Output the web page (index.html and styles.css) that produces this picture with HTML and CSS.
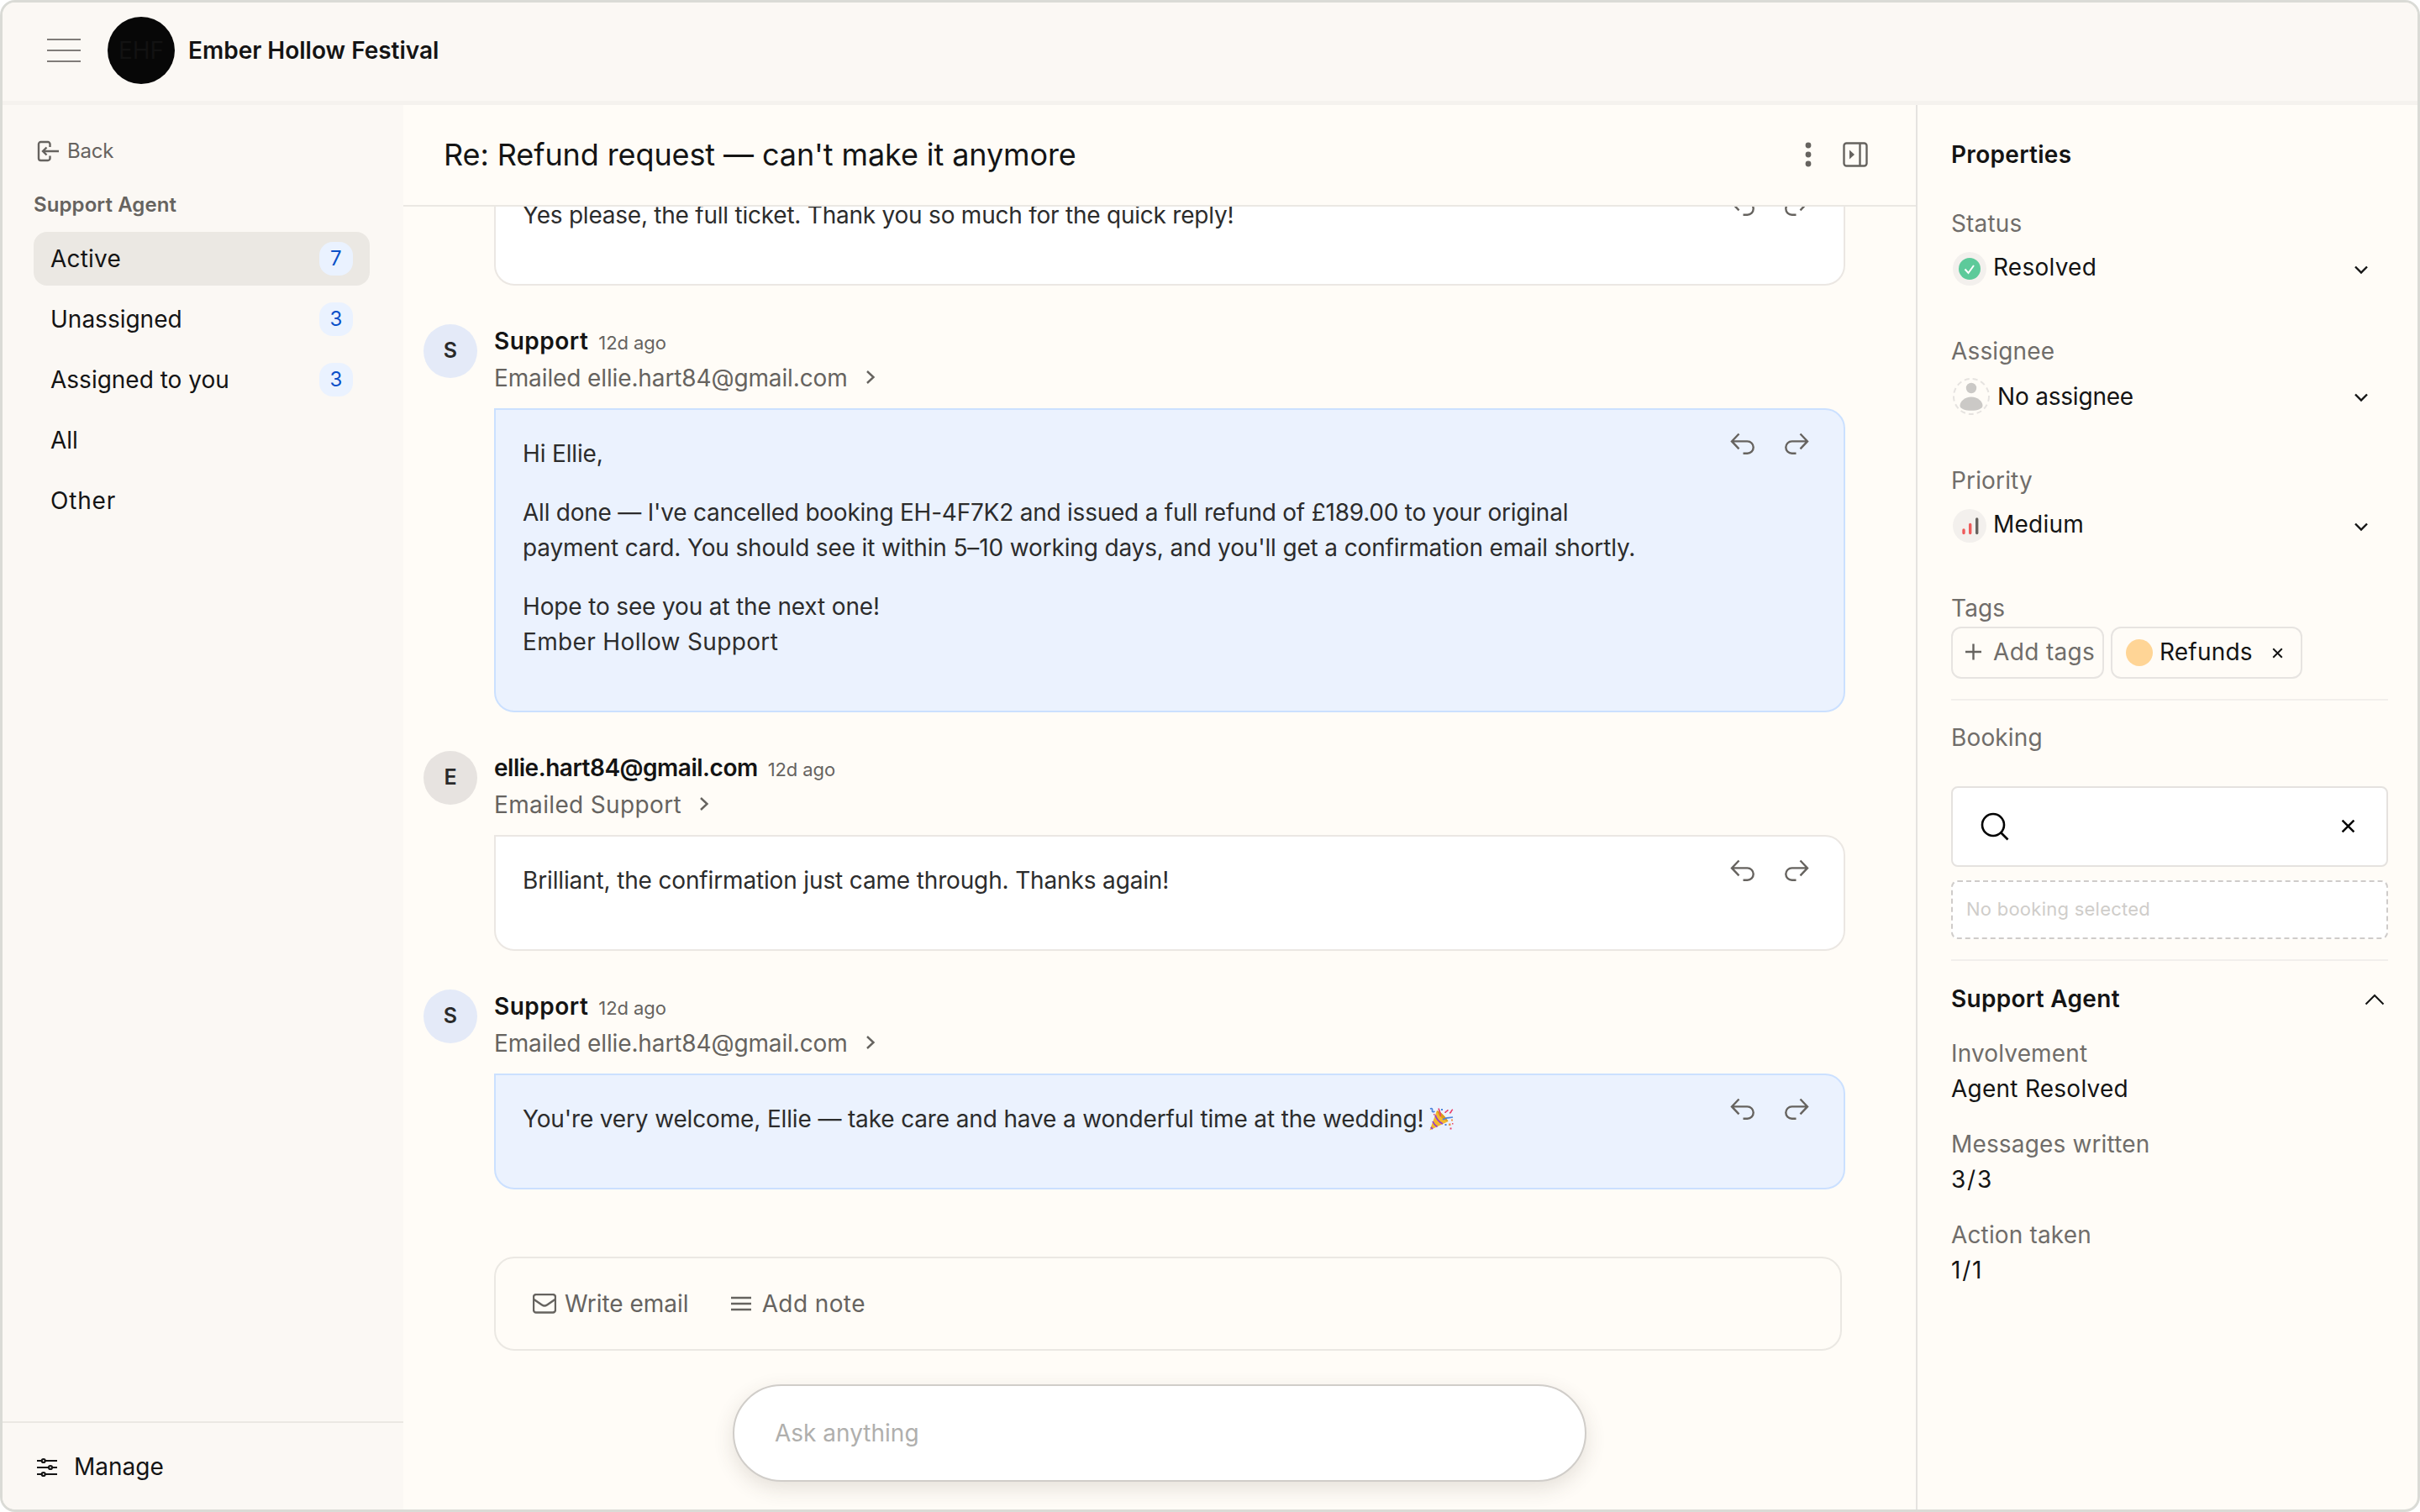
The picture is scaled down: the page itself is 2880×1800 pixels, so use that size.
FILE: index.html
```html
<!DOCTYPE html>
<html lang="en">
<head>
    <meta charset="UTF-8">
    <title>Ember Hollow Festival</title>
    <link rel="stylesheet" href="styles.css">
</head>
<body>
<svg width="0" height="0" class="defs">
    <symbol id="reply" viewBox="0 0 30 28">
        <path d="M10.5 2.5L2 11.4l8.500 8.900M2 11.400h18.500a7.200 7.200 0 0 1 0 14.400H15.500"/>
    </symbol>
    <symbol id="forward" viewBox="0 0 30 28">
        <path d="M19.500 2.500L28 11.400l-8.500 8.900M28 11.400H9.500a7.200 7.200 0 0 0 0 14.400h5"/>
    </symbol>
    <symbol id="right" viewBox="0 0 12 18">
        <path d="M2 2l7.500 7L2 16"/>
    </symbol>
    <symbol id="down" viewBox="0 0 18 12">
        <path d="M2 2.500l7 7 7-7"/>
    </symbol>
    <symbol id="close" viewBox="0 0 16 16">
        <path d="M1.500 1.500l13 13M14.500 1.500l-13 13"/>
    </symbol>
</svg>
<div id="app">
    <div id="top">
        <svg class="menu" width="40" height="30" viewBox="0 0 40 30"><path d="M0 2h40M0 15h40M0 28h40"/></svg>
        <span class="logo">EHF</span>
        <b>Ember Hollow Festival</b>
    </div>
    <div id="page">
        <div id="side">
            <div class="back">
                <svg width="27" height="26" viewBox="0 0 27 26"><path d="M15.500 8V4.500A2.500 2.500 0 0 0 13 2H4.500A2.500 2.500 0 0 0 2 4.500v17A2.500 2.500 0 0 0 4.500 24H13a2.500 2.500 0 0 0 2.500-2.500V18.500M26 13H7M11.500 8.500L7 13l4.500 4.500"/></svg>
                Back
            </div>
            <h4>Support Agent</h4>
            <ul>
                <li class="select">Active<span>7</span></li>
                <li>Unassigned<span>3</span></li>
                <li>Assigned to you<span>3</span></li>
                <li>All</li>
                <li class="other">Other</li>
            </ul>
            <div class="manage">
                <svg width="24" height="24" viewBox="0 0 24 24">
                    <path d="M0 4h5.500M10 4h14M0 12h14M18 12h6M0 20h5.500M10 20h14"/>
                    <circle cx="7.700" cy="4" r="2"/><circle cx="16" cy="12" r="2"/><circle cx="7.700" cy="20" r="2"/>
                </svg>
                Manage
            </div>
        </div>

        <div id="main">
            <div class="subject">
                <h1>Re: Refund request — can't make it anymore</h1>
                <svg class="dots" width="8" height="30" viewBox="0 0 8 30"><circle cx="4" cy="4" r="3.400"/><circle cx="4" cy="15" r="3.400"/><circle cx="4" cy="26" r="3.400"/></svg>
                <svg class="panel" width="30" height="30" viewBox="0 0 30 30"><rect x="1.500" y="1.500" width="27" height="27" rx="3"/><path d="M20.500 2v26"/><path class="fill" d="M8 9.500l6 5.500-6 5.500z"/></svg>
            </div>

            <div id="thread">
                <div class="msg">
                    <div class="body">
                        <div class="bubble">
                            <p class="tight">Yes please, the full ticket. Thank you so much for the quick reply!</p>
                            <div class="acts"><svg><use href="#reply"/></svg><svg><use href="#forward"/></svg></div>
                        </div>
                    </div>
                </div>
                <div class="msg agent">
                    <span class="avatar">S</span>
                    <div class="body">
                        <div class="name"><b>Support</b><i>12d ago</i></div>
                        <div class="to">Emailed ellie.hart84@gmail.com<svg><use href="#right"/></svg></div>
                        <div class="bubble">
                            <div>
                                <p>Hi Ellie,</p>
                                <p><span class="tight">All done — I've cancelled booking EH-4F7K2 and issued a full refund of £189.00 to your original</span><br>payment card. You should see it within 5–10 working days, and you'll get a confirmation email shortly.</p>
                                <p>Hope to see you at the next one!<br><span class="team">Ember Hollow Support</span></p>
                            </div>
                            <div class="acts"><svg><use href="#reply"/></svg><svg><use href="#forward"/></svg></div>
                        </div>
                    </div>
                </div>
                <div class="msg">
                    <span class="avatar">E</span>
                    <div class="body">
                        <div class="name"><b class="mail">ellie.hart84@gmail.com</b><i>12d ago</i></div>
                        <div class="to team">Emailed Support<svg><use href="#right"/></svg></div>
                        <div class="bubble">
                            <p>Brilliant, the confirmation just came through. Thanks again!</p>
                            <div class="acts"><svg><use href="#reply"/></svg><svg><use href="#forward"/></svg></div>
                        </div>
                    </div>
                </div>
                <div class="msg agent">
                    <span class="avatar">S</span>
                    <div class="body">
                        <div class="name"><b>Support</b><i>12d ago</i></div>
                        <div class="to">Emailed ellie.hart84@gmail.com<svg><use href="#right"/></svg></div>
                        <div class="bubble">
                            <p>You're very welcome, Ellie — take care and have a wonderful time at the wedding!<svg class="party" width="29" height="29" viewBox="0 0 29 29">
                                <path fill="#f3b92f" d="M.5 27.500L9 4c5 2 10.500 7.500 13.500 13z"/>
                                <path fill="#d99a1c" d="M9 4c1 5 7 11.500 13.500 13C19.500 11.500 14 6 9 4z"/>
                                <path fill="none" stroke="#9440c8" stroke-width="1.800" d="M7 9.500c1.500 4.500 5 8.500 9 10.500M4 17c1.200 3 3 5 5.500 6.500M1.800 24l2.200 2"/>
                                <path fill="none" stroke="#e8446e" stroke-width="1.700" d="M13 11c1-4-1-6-2-9.500M19 7c0-3 3-1 3-4M24 7c3 0 1-3 4-4"/>
                                <path fill="none" stroke="#4a82dc" stroke-width="1.700" d="M16 15c3-3 7-2 12-3M1 2c2-1 3 0 2.500 2S5 6 6.500 5"/>
                                <path fill="#4a82dc" d="M14 2h2v2h-2zM18.500 20h2v2h-2z"/>
                                <path fill="#f09a4a" d="M23 19.500h2.500V22H23zM26 14.500h2v2h-2z"/>
                                <path fill="#e8446e" d="M24.500 24.500h2v2h-2zM27 19h1.500v1.500H27zM5 8h1.500v1.500H5z"/>
                            </svg></p>
                            <div class="acts"><svg><use href="#reply"/></svg><svg><use href="#forward"/></svg></div>
                        </div>
                    </div>
                </div>
            </div>

            <div class="composer">
                <svg width="28" height="24" viewBox="0 0 28 24"><rect x="1" y="1" width="26" height="21.500" rx="3"/><path d="M1.500 7l9.500 6.500q3 2 6 0L26.500 7"/></svg>
                <span class="write">Write email</span>
                <svg width="24" height="18" viewBox="0 0 24 18"><path d="M0 2h24M0 9h24M0 16h24"/></svg>
                <span class="note">Add note</span>
            </div>
            <div class="ask">Ask anything</div>
        </div>

        <div id="props">
            <h3>Properties</h3>
            <div class="field">
                <label>Status</label>
                <div class="value">
                    <svg class="round" width="40" height="40" viewBox="0 0 40 40"><circle cx="20" cy="20" r="20" fill="#f3f0ed"/><circle cx="20" cy="20" r="13" fill="#5dca9a"/><path d="M14.500 20.500l4 4.500 6.500-9" fill="none" stroke="#fff" stroke-width="2"/></svg>
                    <span>Resolved</span>
                    <svg class="down"><use href="#down"/></svg>
                </div>
            </div>
            <div class="field assignee">
                <label>Assignee</label>
                <div class="value">
                    <svg width="44" height="44" viewBox="0 0 44 44"><circle cx="22" cy="22" r="21" fill="none" stroke="#e6e3e0" stroke-width="2" stroke-dasharray="6 4"/><circle cx="22" cy="12" r="6.200" fill="#cbc9c6"/><path d="M22 22.500c8 0 13.500 5.500 13.500 10.500 0 3.500-6 5.800-13.500 5.800S8.500 36.500 8.500 33c0-5 5.500-10.500 13.500-10.500z" fill="#cbc9c6"/></svg>
                    <span>No assignee</span>
                    <svg class="down"><use href="#down"/></svg>
                </div>
            </div>
            <div class="field">
                <label>Priority</label>
                <div class="value">
                    <svg class="round" width="40" height="40" viewBox="0 0 40 40"><circle cx="20" cy="20" r="20" fill="#f3f0ed"/><g stroke-width="3.400" stroke-linecap="round"><path d="M13 25v3.500M20.700 18.500v10" stroke="#ee5b5b"/><path d="M28.700 12v16.500" stroke="#66635f"/></g></svg>
                    <span>Medium</span>
                    <svg class="down"><use href="#down"/></svg>
                </div>
            </div>
            <label>Tags</label>
            <div class="tags">
                <div class="tag add"><svg width="19" height="20" viewBox="0 0 19 20"><path d="M9.500 0.500v19M0 10h19"/></svg>Add tags</div>
                <div class="tag"><em></em>Refunds<svg class="x"><use href="#close"/></svg></div>
            </div>
            <hr>
            <label>Booking</label>
            <div class="search">
                <svg width="34" height="34" viewBox="0 0 34 34"><circle cx="15" cy="15" r="13"/><path d="M24.500 24.500l8 8"/></svg>
                <svg class="x"><use href="#close"/></svg>
            </div>
            <div class="empty">No booking selected</div>
            <hr>
            <div class="fold">Support Agent<svg width="24" height="14" viewBox="0 0 24 14"><path d="M1.500 12.500L12 2l10.500 10.500"/></svg></div>
            <dl>
                <dt>Involvement</dt><dd>Agent Resolved</dd>
                <dt>Messages written</dt><dd class="num">3/3</dd>
                <dt>Action taken</dt><dd class="num">1/1</dd>
            </dl>
        </div>
    </div>
</div>
</body>
</html>
```
FILE: styles.css
```css
*{
    margin: 0;
    padding: 0;
    box-sizing: border-box;
}
ul{
    list-style: none;
}
i,em{
    font-style: normal;
}
b,h3{
    font-weight: 600;
}
body{
    background: #fff;
    font: 28px/40px Inter, "Liberation Sans", sans-serif;
    color: #141414;
}
svg{
    flex: none;
    fill: none;
    stroke: #66635f;
    stroke-width: 2.4;
}
.defs{
    position: absolute;
}
#app{
    height: 1800px;
    border: 3px solid #dadbd6;
    border-radius: 18px;
    background: #fffcf7;
    overflow: hidden;
    display: flex;
    flex-direction: column;
}

/* top bar */
#top{
    height: 122px;
    flex: none;
    padding: 0 0 3px 53px;
    display: flex;
    align-items: center;
    background: #fbf8f4;
    border-bottom: 5px solid #f5f2ee;
}
.menu{
    stroke: #807c79;
    stroke-width: 2;
}
.logo{
    width: 80px;
    height: 80px;
    margin: 0 16px 0 32px;
    border-radius: 50%;
    background: #070707;
    color: #121212;
    line-height: 80px;
    text-align: center;
}
#page{
    flex: 1;
    min-height: 0;
    display: flex;
}

/* sidebar */
#side{
    width: 477px;
    background: #fbf8f4;
    display: flex;
    flex-direction: column;
}
.back{
    display: flex;
    align-items: center;
    gap: 9px;
    height: 36px;
    margin: 37px 0 30px 41px;
    font-size: 24px;
    letter-spacing: -0.2px;
    color: #66635f;
}
#side h4{
    margin: 0 0 16px 37px;
    font-size: 24px;
    line-height: 32px;
    font-weight: 600;
    letter-spacing: 0.1px;
    color: #66635f;
}
#side ul{
    flex: 1;
    padding: 0 40px 0 37px;
}
#side li{
    height: 64px;
    margin-bottom: 8px;
    padding: 0 20px;
    border-radius: 16px;
    display: flex;
    align-items: center;
    justify-content: space-between;
}
#side .select{
    background: #ebe8e3;
    letter-spacing: 0.2px;
}
#side .other{
    letter-spacing: 0.8px;
}
#side li span{
    width: 40px;
    border-radius: 16px;
    background: #eaf2ff;
    color: #0a50c8;
    font-size: 24px;
    text-align: center;
}
.manage{
    height: 105px;
    padding: 1px 0 0 41px;
    border-top: 2px solid #ebe8e3;
    display: flex;
    align-items: center;
    gap: 20px;
}
.manage svg{
    margin-top: 2px;
    stroke: #141414;
    stroke-width: 2.2;
}

/* conversation */
#main{
    flex: 1;
    min-width: 0;
    display: flex;
    flex-direction: column;
}
.subject{
    height: 121px;
    flex: none;
    padding: 0 57px 2px 48px;
    border-bottom: 2px solid #ebe8e3;
    display: flex;
    align-items: center;
}
.subject h1{
    flex: 1;
    font-size: 36px;
    font-weight: 400;
    letter-spacing: -0.1px;
}
.dots{
    fill: #66635f;
    stroke: none;
    margin-right: 37px;
}
.fill{
    fill: #66635f;
    stroke: none;
}
#thread{
    flex: 1;
    min-height: 0;
    overflow: hidden;
    padding: 0 84px 0 24px;
    display: flex;
    flex-direction: column;
    justify-content: flex-end;
    gap: 46px;
}
.msg{
    flex: none;
    display: flex;
    justify-content: flex-end;
    align-items: flex-start;
}
.avatar{
    width: 64px;
    height: 64px;
    margin-right: 20px;
    border-radius: 50%;
    background: #e7e3e0;
    color: #2a2a2a;
    font-size: 25px;
    font-weight: 600;
    line-height: 62px;
    text-align: center;
}
.agent .avatar{
    background: #e4eaf8;
}
.body{
    width: 1608px;
}
.name b{
    letter-spacing: 0.5px;
}
.name .mail{
    letter-spacing: -0.48px;
}
.name i{
    margin-left: 12px;
    font-size: 22px;
    letter-spacing: -0.1px;
    color: #66635f;
}
.name{
    height: 40px;
}
.to{
    margin: 4px 0 16px;
    color: #66635f;
    letter-spacing: -0.12px;
    display: flex;
    align-items: center;
}
.to svg{
    width: 12px;
    height: 18px;
    margin: -2px 0 0 21px;
}
.bubble{
    padding: 31px 41px 61px 32px;
    border: 2px solid #ebe7e3;
    border-radius: 0 24px 24px 24px;
    background: #fff;
    color: #2c2c2c;
    line-height: 42px;
    letter-spacing: -0.15px;
    display: flex;
    justify-content: space-between;
}
.tight{
    letter-spacing: -0.23px;
}
.team{
    letter-spacing: 0.35px;
}
.bubble p + p{
    margin-top: 28px;
}
.agent .bubble{
    background: #ebf2fe;
    border-color: #cbe0ff;
}
.acts{
    display: flex;
    gap: 34px;
    margin-top: -5px;
}
.acts svg{
    width: 30px;
    height: 28px;
}
.bubble .party{
    stroke: none;
    margin-left: 7px;
    vertical-align: -5px;
}
.composer{
    height: 112px;
    flex: none;
    margin: 80px 88px 40px 108px;
    padding-left: 44px;
    border: 2px solid #ebe8e3;
    border-radius: 24px;
    color: #66635f;
    display: flex;
    align-items: center;
}
.write{
    margin: 0 50px 0 10px;
}
.note{
    margin-left: 13px;
    letter-spacing: 0.4px;
}
.ask{
    width: 1016px;
    height: 116px;
    flex: none;
    margin: 0 0 33px 392px;
    padding-left: 48px;
    border: 2px solid #d0cdc9;
    border-radius: 58px;
    background: #fff;
    box-shadow: 0 8px 24px rgba(70, 60, 45, .14);
    line-height: 112px;
    color: #b0afad;
}

/* properties */
#props{
    width: 597px;
    padding: 39px 35px 0 40px;
    border-left: 2px solid #e5e3e0;
}
#props h3{
    font-size: 28px;
    margin-bottom: 42px;
    letter-spacing: 0.3px;
}
label{
    display: block;
    color: #706d6a;
    letter-spacing: 0.15px;
}
.value{
    height: 44px;
    margin: 12px 0 56px 2px;
    display: flex;
    align-items: center;
}
.assignee .value{
    margin-bottom: 58px;
}
.value span{
    flex: 1;
    margin-left: 8px;
}
.assignee span{
    margin-left: 9px;
    letter-spacing: -0.2px;
}
.round + span{
    padding-bottom: 4px;
    letter-spacing: 0.25px;
}
.value svg{
    stroke: none;
}
.value .down{
    width: 18px;
    height: 12px;
    margin: 2px 23px 0 0;
    stroke: #141414;
}
.tags{
    display: flex;
    gap: 8px;
    margin: 2px 0 24px;
}
.tag{
    width: 228px;
    height: 62px;
    padding: 0 0 2px 16px;
    border: 2px solid #e7e4e1;
    border-radius: 12px;
    letter-spacing: 0.2px;
    display: flex;
    align-items: center;
}
.tag em{
    width: 32px;
    height: 32px;
    margin: 2px 8px 0 0;
    border-radius: 50%;
    background: #ffd596;
}
.tag .x{
    width: 13px;
    height: 13px;
    margin: 3px 0 0 23px;
    stroke: #141414;
}
.add{
    width: 182px;
    padding-left: 15px;
    gap: 14px;
    color: #706d6a;
    letter-spacing: 0.35px;
}
hr{
    border: 0;
    height: 2px;
    margin-bottom: 24px;
    background: #f2efec;
}
.search{
    height: 96px;
    margin: 38px 0 16px;
    padding: 0 37px 1px 33px;
    border: 2px solid #e5e2df;
    border-radius: 8px;
    background: #fff;
    display: flex;
    align-items: center;
    justify-content: space-between;
}
.search svg{
    stroke: #000;
    stroke-width: 2.6;
}
.search .x{
    width: 17px;
    height: 17px;
    stroke-width: 2.3;
}
.empty{
    height: 70px;
    margin-bottom: 24px;
    padding-left: 16px;
    border: 2px dashed #cfccca;
    border-radius: 8px;
    background: #fff;
    font-size: 22px;
    line-height: 64px;
    letter-spacing: 0.25px;
    color: #cfcdca;
}
.fold{
    margin-top: 25px;
    padding-right: 4px;
    font-weight: 600;
    letter-spacing: 0.3px;
    display: flex;
    align-items: center;
    justify-content: space-between;
}
.fold svg{
    margin-top: 1px;
    stroke: #141414;
    stroke-width: 2;
}
dl{
    line-height: 42px;
}
dt{
    margin-top: 24px;
    color: #706d6a;
    letter-spacing: 0.15px;
}
dd{
    letter-spacing: 0.25px;
}
.num{
    letter-spacing: 1.8px;
}
```
